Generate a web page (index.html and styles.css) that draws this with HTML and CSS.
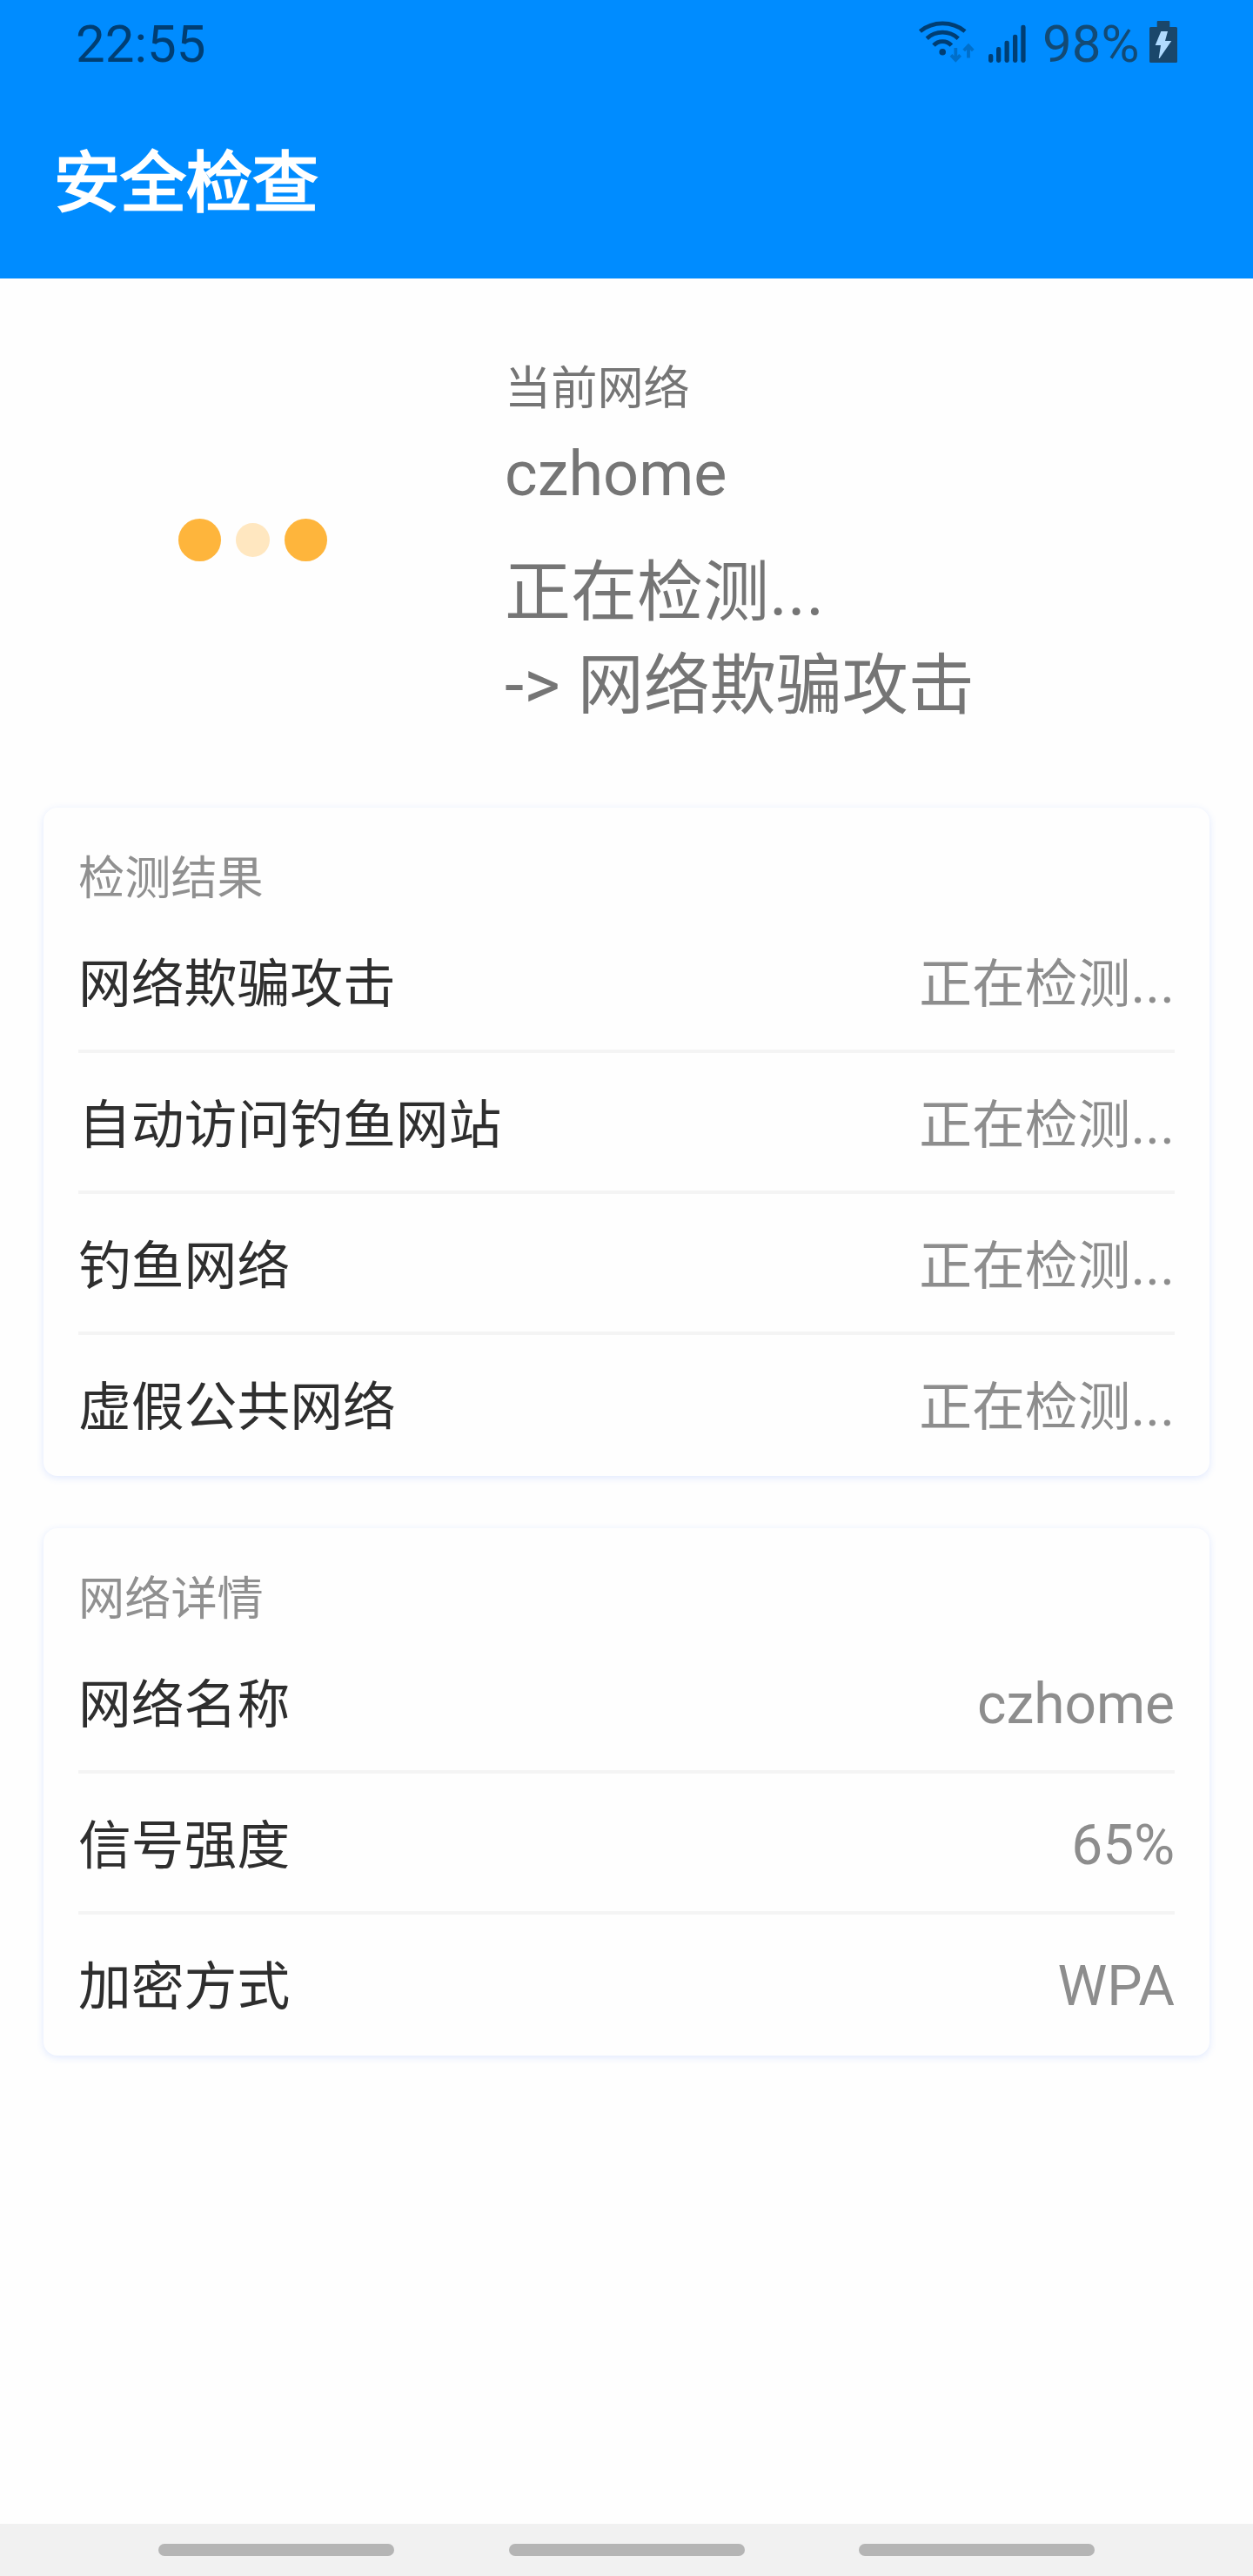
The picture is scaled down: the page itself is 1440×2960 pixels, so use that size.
FILE: index.html
```html
<!DOCTYPE html>
<html lang="zh-CN">
<head>
<meta charset="utf-8">
<title>安全检查</title>
<link rel="stylesheet" href="styles.css">
</head>
<body>
<div class="screen">
  <header class="header">
    <div class="status">
      <span class="status-time">22:55</span>
      <div class="status-right">
        <svg class="icon-wifi" width="67" height="48" viewBox="0 0 67 48">
          <g fill="none" stroke="#003e73" stroke-width="4.8">
            <path d="M2.4 12A41.2 41.2 0 0 1 54 12"/>
            <path d="M10.2 20.2A26.6 26.6 0 0 1 46.2 20.2"/>
            <path d="M18 28.2A13.6 13.6 0 0 1 38.4 28.2"/>
          </g>
          <circle cx="28.2" cy="35.8" r="3.8" fill="#003e73"/>
          <g fill="none" stroke="#006fca" stroke-width="3.8">
            <path d="M43.3 31V45M38 39.4L43.3 45L48.6 39.4"/>
            <path d="M58 42.5V28.5M52.7 34L58 28.5L63.3 34"/>
          </g>
        </svg>
        <svg class="icon-signal" width="44" height="48" viewBox="0 0 44 48" fill="#003e73">
          <rect x="1" y="38" width="5.3" height="10" rx="2.4"/>
          <rect x="10" y="30" width="5.3" height="18" rx="2.4"/>
          <rect x="19.5" y="22.7" width="5.3" height="25.3" rx="2.4"/>
          <rect x="29" y="15.7" width="5.3" height="32.3" rx="2.4"/>
          <rect x="38.3" y="4.7" width="5.3" height="43.3" rx="2.4"/>
        </svg>
        <span class="status-level">98%</span>
        <svg class="icon-battery" width="32" height="48" viewBox="0 0 32 48">
          <path fill="#1a476b" d="M8.7 1Q8.7 0 9.7 0H22.3Q23.3 0 23.3 1V7H30.5Q32 7 32 8.5V46.5Q32 48 30.5 48H1.5Q0 48 0 46.5V8.5Q0 7 1.5 7H8.7Z"/>
          <path fill="#b0dbff" d="M13.3 12H21L18 23H25.3L11.6 43H10.7L13 28H6.7Z"/>
        </svg>
      </div>
    </div>
    <h1 class="title">安全检查</h1>
  </header>

  <section class="hero">
    <div class="loader">
      <span class="dot"></span>
      <span class="dot dot-faded"></span>
      <span class="dot"></span>
    </div>
    <div class="network">
      <p class="network-caption">当前网络</p>
      <p class="network-name">czhome</p>
      <p class="network-state"><span class="han">正在检测</span>...<br>-&gt; <span class="han">网络欺骗攻击</span></p>
    </div>
  </section>

  <main class="cards">
    <section class="card">
      <h2 class="card-title">检测结果</h2>
      <div class="row"><span class="han label">网络欺骗攻击</span><span class="value"><span class="han">正在检测</span>...</span></div>
      <div class="row"><span class="han label">自动访问钓鱼网站</span><span class="value"><span class="han">正在检测</span>...</span></div>
      <div class="row"><span class="han label">钓鱼网络</span><span class="value"><span class="han">正在检测</span>...</span></div>
      <div class="row"><span class="han label">虚假公共网络</span><span class="value"><span class="han">正在检测</span>...</span></div>
    </section>
    <section class="card">
      <h2 class="card-title">网络详情</h2>
      <div class="row"><span class="han label">网络名称</span><span class="value">czhome</span></div>
      <div class="row"><span class="han label">信号强度</span><span class="value">65%</span></div>
      <div class="row"><span class="han label">加密方式</span><span class="value">WPA</span></div>
    </section>
  </main>

  <nav class="navbar">
    <span class="nav-hint"></span>
    <span class="nav-hint"></span>
    <span class="nav-hint"></span>
  </nav>
</div>
</body>
</html>
```
FILE: styles.css
```css
* {
  box-sizing: border-box;
}

body,
h1,
h2,
p {
  margin: 0;
  font-weight: 400;
}

body {
  background: #fefefe;
  font-family: Roboto, "Noto Sans CJK SC", sans-serif;
}

.screen {
  display: flex;
  flex-direction: column;
  width: 1440px;
  height: 2960px;
}

.han {
  font-size: 0.95em;
}

/* Header */
.header {
  height: 320px;
  background: #008cff;
}

.status {
  display: flex;
  justify-content: space-between;
  height: 101px;
  padding: 0 87px;
  font-size: 60px;
  line-height: 101px;
}

.status-time {
  color: #003e73;
}

.status-right {
  display: flex;
  align-items: flex-start;
}

.status-right svg {
  margin-top: 24px;
}

.icon-signal {
  margin-left: 13px;
}

.status-level {
  width: 111px;
  margin: 0 12px 0 19px;
  color: #124a75;
}

/* Medium weight: regular glyphs thickened by a thin outline */
.title {
  padding: 60px 62px 0;
  color: #fff;
  font-size: 76px;
  line-height: 100px;
  -webkit-text-stroke: 2.4px #fff;
}

/* Current network */
.hero {
  display: flex;
  height: 600px;
  margin-bottom: 8px;
}

.loader {
  display: flex;
  align-items: center;
  justify-content: center;
  gap: 17px;
  width: 580px;
}

.dot {
  width: 49px;
  height: 49px;
  border-radius: 50%;
  background: #feb53c;
}

.dot-faded {
  width: 39px;
  height: 39px;
  background: #ffe7c0;
}

.network {
  padding-top: 89px;
  color: #757575;
}

.network-caption {
  font-size: 53.2px;
  line-height: 76px;
}

.network-name {
  margin-top: 5px;
  font-size: 72px;
  line-height: 110px;
}

.network-state {
  margin-top: 27px;
  font-size: 80px;
  line-height: 106px;
}

/* Cards */
.cards {
  display: flex;
  flex: 1;
  flex-direction: column;
  gap: 60px;
  padding: 0 50px;
}

.card {
  padding: 0 40px 4px;
  border-radius: 16px;
  background: #fefefe;
  box-shadow: 0 2px 8px rgba(60, 120, 255, 0.16);
}

.card-title {
  height: 120px;
  padding-top: 44px;
  color: #909090;
  font-size: 53.2px;
  line-height: 76px;
}

.row {
  display: flex;
  align-items: baseline;
  justify-content: space-between;
  height: 158px;
  padding-top: 7px;
  font-size: 64px;
  line-height: 151px;
}

.row + .row {
  height: 162px;
  border-top: 4px solid #f4f4f4;
}

.label {
  color: #2e2e2e;
}

.value {
  color: #8d8d8d;
}

/* System navigation hints */
.navbar {
  display: flex;
  align-items: center;
  justify-content: center;
  gap: 131.5px;
  height: 60px;
  background: #f1f1f1;
}

.nav-hint {
  width: 271px;
  height: 14px;
  border-radius: 7px;
  background: #b5b5b5;
}
```
